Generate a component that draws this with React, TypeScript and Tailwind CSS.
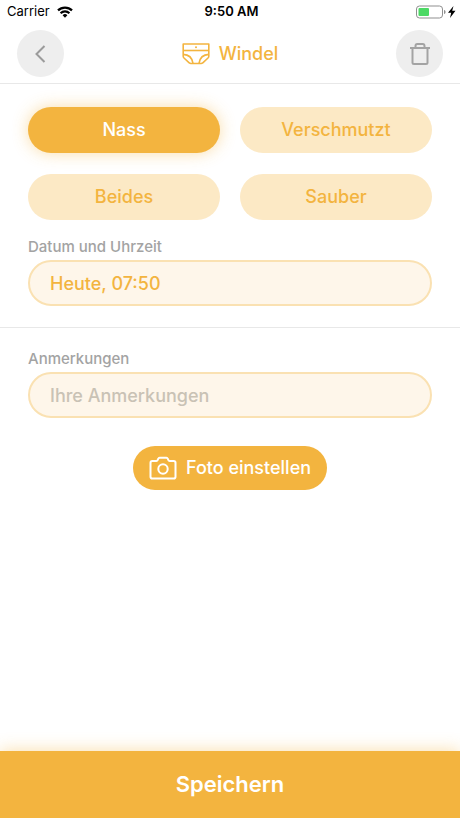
import { useState } from "react";

const KINDS = ["Nass", "Verschmutzt", "Beides", "Sauber"];

function WifiIcon() {
  return (
    <svg width="16" height="12" viewBox="0 0 16 12" fill="none" stroke="#000" strokeWidth="2.2" aria-hidden="true">
      <path d="M1 4.400a10 10 0 0 1 14 0" />
      <path d="M3.600 7.200a6.200 6.200 0 0 1 8.800 0" />
      <path d="M8 11.800 5.600 9.300a3.400 3.400 0 0 1 4.800 0z" fill="#000" stroke="none" />
    </svg>
  );
}

function BatteryIcon() {
  return (
    <svg width="40" height="14" viewBox="0 0 40 14" aria-hidden="true">
      <rect x="0.5" y="1" width="26" height="12" rx="3" fill="#fff" stroke="#8f8f8f" />
      <rect x="2.5" y="3" width="10.5" height="8" rx="1" fill="#4cd964" />
      <path d="M28 5v4c1.200-.4 1.600-1.200 1.600-2S29.200 5.400 28 5z" fill="#8f8f8f" />
      <path d="M37.500 1 32 7.800h3.200L34 13l5.500-7.200h-3.300z" fill="#000" />
    </svg>
  );
}

function DiaperIcon() {
  return (
    <svg width="28" height="22" viewBox="0 0 28 22" fill="none" stroke="#f3b43f" strokeWidth="1.600" strokeLinejoin="round" aria-hidden="true">
      <path d="M1.200 1h25.600v12.200c0 .8-.2 1.300-.8 1.800l-5.200 4.800c-.5.500-1 .7-1.700.7H8.900c-.7 0-1.200-.2-1.700-.7L2 15c-.6-.5-.8-1-.8-1.800z" />
      <path d="M1.200 7.500h25.600" />
      <path d="M1.200 11.400c5.300.2 9 3.600 9.800 9M26.800 11.400c-5.300.2-9 3.600-9.800 9" />
      <circle cx="14" cy="4.300" r="1" fill="#f3b43f" stroke="none" />
    </svg>
  );
}

function TrashIcon() {
  return (
    <svg width="22" height="22" viewBox="0 0 22 22" fill="none" stroke="#a3a3a3" strokeWidth="2" aria-hidden="true">
      <path d="M1 5h20" />
      <path d="M6.500 5V3c0-1.100.7-2 1.800-2h5.400c1.100 0 1.800.9 1.800 2v2" />
      <path d="M3.500 5v14.500c0 .9.600 1.500 1.500 1.500h12c.9 0 1.500-.6 1.500-1.500V5" />
    </svg>
  );
}

function CameraIcon() {
  return (
    <svg width="28" height="24" viewBox="0 0 28 24" fill="none" stroke="#fff" strokeWidth="2" strokeLinejoin="round" aria-hidden="true">
      <path d="M3.300 5h4.100c.6 0 1-.3 1.200-.8l.7-1.500c.2-.6.700-.9 1.300-.9h6.800c.6 0 1.100.3 1.300.9l.7 1.500c.2.500.6.800 1.200.8h4.100c1.100 0 1.800.7 1.800 1.800v13.900c0 1.100-.7 1.800-1.800 1.800H3.300c-1.100 0-1.800-.7-1.800-1.800V6.800C1.500 5.700 2.200 5 3.300 5z" />
      <circle cx="14" cy="13" r="4.700" />
    </svg>
  );
}

export default function App() {
  const [kind, setKind] = useState("Nass");
  const [date, setDate] = useState("Heute, 07:50");
  const [notes, setNotes] = useState("");

  const roundButton = "flex size-[47px] items-center justify-center rounded-full bg-[#eeeeee]";
  const label = "mb-[3px] block text-[15px] leading-5 font-medium text-[#a3a3a3]";
  const field =
    "block h-[46px] w-full rounded-full border-2 border-[#fae1b2] bg-[#fef6ea] px-5 text-lg font-medium text-[#f3b43f] outline-none placeholder:text-[#c9c2b5] placeholder:opacity-100";

  return (
    <div className="flex min-h-screen flex-col bg-white font-['Inter','Liberation_Sans',sans-serif]">
      <div className="grid h-6 grid-cols-3 items-center pr-1 pl-[7px] text-[13px] text-black">
        <div className="flex items-center gap-[7px]">
          <span>Carrier</span>
          <WifiIcon />
        </div>
        <span className="text-center font-semibold">9:50 AM</span>
        <div className="flex justify-end">
          <BatteryIcon />
        </div>
      </div>

      <header className="flex h-[60px] items-center justify-between border-b border-[#e8e8e8] px-[17px]">
        <button type="button" aria-label="Zurück" className={roundButton}>
          <svg width="12" height="18" viewBox="0 0 12 18" fill="none" stroke="#9b9b9b" strokeWidth="2" aria-hidden="true">
            <path d="M9.500 1 1.500 9l8 8" />
          </svg>
        </button>
        <h1 className="flex items-center gap-[9px] text-lg font-medium text-[#f3b43f]">
          <DiaperIcon />
          Windel
        </h1>
        <button type="button" aria-label="Löschen" className={roundButton}>
          <TrashIcon />
        </button>
      </header>

      <main className="flex-1">
        <section className="border-b border-[#e8e8e8] px-7 pt-[23px] pb-[21px]">
          <div className="grid grid-cols-2 gap-x-5 gap-y-[21px]">
            {KINDS.map((k) => (
              <button
                key={k}
                type="button"
                aria-pressed={kind === k}
                onClick={() => setKind(k)}
                className={
                  kind === k
                    ? "h-[46px] rounded-full bg-[#f3b43f] text-lg font-medium text-white shadow-[0_0_16px_rgba(243,180,63,0.45)]"
                    : "h-[46px] rounded-full bg-[#fce9c5] text-lg font-medium text-[#f3b43f]"
                }
              >
                {k}
              </button>
            ))}
          </div>
          <div className="mt-[17px]">
            <label htmlFor="date" className={label}>Datum und Uhrzeit</label>
            <input id="date" type="text" value={date} onChange={(e) => setDate(e.target.value)} className={field} />
          </div>
        </section>

        <section className="px-7 pt-[21px] pb-7">
          <label htmlFor="notes" className={label}>Anmerkungen</label>
          <input
            id="notes"
            type="text"
            placeholder="Ihre Anmerkungen"
            value={notes}
            onChange={(e) => setNotes(e.target.value)}
            className={field}
          />
          <button
            type="button"
            className="mx-auto mt-7 flex h-11 items-center gap-[9px] rounded-full bg-[#f3b43f] px-4 text-lg font-medium text-white"
          >
            <CameraIcon />
            Foto einstellen
          </button>
        </section>
      </main>

      <button
        type="button"
        className="h-[67px] w-full bg-[#f3b43f] text-[22px] font-semibold text-white shadow-[0_0_16px_rgba(243,180,63,0.45)]"
      >
        Speichern
      </button>
    </div>
  );
}
